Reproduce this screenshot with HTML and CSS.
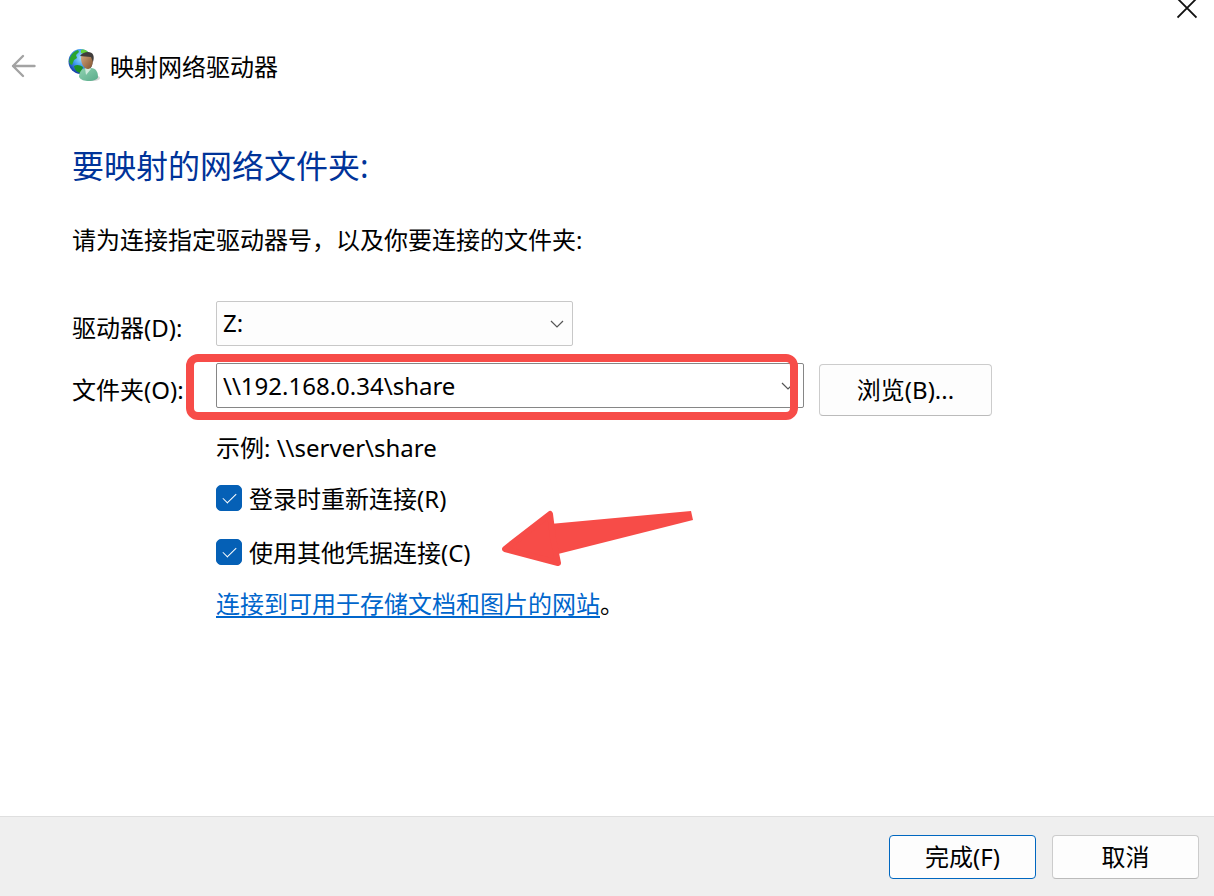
FILE: index.html
```
<!DOCTYPE html>
<html lang="zh-CN">
<head>
    <meta charset="UTF-8">
    <meta name="viewport" content="width=device-width, initial-scale=1.0">
    <title>映射网络驱动器</title>
    <link rel="stylesheet" href="styles.css">
</head>
<body>
    <form class="wizard">
        <div class="titlebar">
            <button type="button" class="close-btn" aria-label="关闭">
                <svg width="20" height="20" viewBox="0 0 20 20"><path d="M0.5 -1.5L19.5 17.5M19.5 -1.5L0.5 17.5" stroke="#111" stroke-width="1.8"/></svg>
            </button>
        </div>

        <header class="header">
            <button type="button" class="back-btn" aria-label="返回">
                <svg width="26" height="24" viewBox="0 0 26 24" fill="none" stroke="#a3a3a3" stroke-width="2.4" stroke-linecap="round" stroke-linejoin="round"><path d="M23.5 12H2M12 2L2 12l10 10"/></svg>
            </button>
            <svg class="app-icon" width="34" height="34" viewBox="0 0 34 34">
                <defs>
                    <radialGradient id="globe" cx="0.55" cy="0.35" r="0.7">
                        <stop offset="0" stop-color="#a8e6ff"/>
                        <stop offset="0.5" stop-color="#3f9cf0"/>
                        <stop offset="1" stop-color="#0b2c9c"/>
                    </radialGradient>
                    <linearGradient id="skin" x1="0" y1="0" x2="1" y2="1">
                        <stop offset="0" stop-color="#d9ad84"/>
                        <stop offset="1" stop-color="#80502b"/>
                    </linearGradient>
                    <linearGradient id="shirt" x1="0" y1="0" x2="1" y2="1">
                        <stop offset="0" stop-color="#8fd2b0"/>
                        <stop offset="1" stop-color="#5aab8b"/>
                    </linearGradient>
                </defs>
                <ellipse cx="26" cy="29" rx="6" ry="3" fill="#bdbdbd" opacity="0.6"/>
                <ellipse cx="12.5" cy="12.5" rx="12" ry="12.5" fill="url(#globe)"/>
                <path d="M2 9C4 4 7 2 10 1l1 2-3 3 1 3-3 2-2 5-2-1c-1-2-1-4 0-6z" fill="#2aa52d"/>
                <path d="M13 1c3-1 5 0 7 2l-3 2-4-1z" fill="#62cf3b"/>
                <path d="M6 17c3-2 6-1 9 1l-2 6c-3 0-6-2-7-7z" fill="#1d9126"/>
                <path d="M11 28c0-5 3-9 7-9h5c5 0 7 4 7 9 0 2-4 4-9 4s-8-1-10-4z" fill="url(#shirt)"/>
                <path d="M17 19l1 7 5-6-2-2h-4z" fill="#cfeadd"/>
                <path d="M13 9c0-3 3-5 6-5 5 0 6 3 6 7 0 5-2 9-5 9-4 0-7-5-7-11z" fill="url(#skin)"/>
                <path d="M12 7c2-3 5-4 8-4 5 0 7 4 5 10l-2-5c-4 0-8-1-11-1z" fill="#403d3c"/>
            </svg>
            <span class="app-title">映射网络驱动器</span>
        </header>

        <main class="content">
            <h1>要映射的网络文件夹:</h1>
            <p class="intro">请为连接指定驱动器号，以及你要连接的文件夹:</p>

            <div class="row">
                <label for="drive">驱动器(D):</label>
                <div class="field drive-field">
                    <select id="drive">
                        <option selected>Z:</option>
                    </select>
                    <svg class="chevron" width="14" height="8" viewBox="0 0 14 8" fill="none" stroke="#555" stroke-width="1.2"><path d="M1 1l6 6 6-6"/></svg>
                </div>
            </div>

            <div class="row">
                <label for="folder">文件夹(O):</label>
                <div class="field folder-field">
                    <input type="text" id="folder" value="\\192.168.0.34\share">
                    <svg class="chevron" width="14" height="8" viewBox="0 0 14 8" fill="none" stroke="#555" stroke-width="1.2"><path d="M1 1l6 6 6-6"/></svg>
                    <div class="highlight"></div>
                </div>
                <button type="button" class="btn browse-btn">浏览(B)...</button>
            </div>

            <div class="options">
                <p>示例: \\server\share</p>
                <div class="checks">
                    <div class="check">
                        <input type="checkbox" id="reconnect" checked>
                        <label for="reconnect">登录时重新连接(R)</label>
                    </div>
                    <div class="check">
                        <input type="checkbox" id="credentials" checked>
                        <label for="credentials">使用其他凭据连接(C)</label>
                        <svg class="arrow" width="194" height="60" viewBox="0 0 194 60" fill="#f74c48"><path d="M50 17L191 4l2 9L58 47z"/><path d="M5 42L50 7l3 24 5 25z" stroke="#f74c48" stroke-width="6" stroke-linejoin="round"/></svg>
                    </div>
                </div>
                <p><a href="#">连接到可用于存储文档和图片的网站</a>。</p>
            </div>
        </main>

        <footer class="footer">
            <button type="submit" class="btn primary">完成(F)</button>
            <button type="button" class="btn">取消</button>
        </footer>
    </form>
</body>
</html>
```
FILE: styles.css
```
* {
    box-sizing: border-box;
}

body {
    margin: 0;
    background: #fff;
    color: #000;
    font-family: "Noto Sans", "Noto Sans CJK SC", sans-serif;
    font-size: 24px;
    line-height: 36px;
}

button, input, select {
    font: inherit;
    color: inherit;
}

p, h1 {
    margin: 0;
}

.wizard {
    display: flex;
    flex-direction: column;
    min-height: 100vh;
}

.titlebar {
    display: flex;
    justify-content: flex-end;
    height: 47px;
    padding-right: 17px;
}

.close-btn, .back-btn {
    display: flex;
    padding: 0;
    border: none;
    background: none;
}

.header {
    display: flex;
    align-items: center;
    padding-left: 11px;
}

.app-icon {
    margin: 0 8px 0 31px;
}

.app-title {
    padding-top: 2px;
}

.content {
    flex: 1;
    padding: 57px 72px 24px;
}

h1 {
    color: #003399;
    font-size: 32px;
    font-weight: 400;
    line-height: 48px;
}

.intro {
    margin: 32px 0 43px;
}

.row {
    display: flex;
    align-items: flex-start;
    margin-bottom: 8px;
}

.row label {
    flex: none;
    width: 144px;
    line-height: 54px;
}

.field {
    position: relative;
}

.drive-field {
    width: 357px;
}

.folder-field {
    flex: 0 1 588px;
    margin-right: 15px;
}

.field select, .field input {
    display: block;
    width: 100%;
    height: 45px;
    padding: 0 36px 1px 6px;
    border: 1px solid #c8c8c8;
    border-radius: 2px;
    background: #fdfdfd;
    appearance: none;
    outline: none;
}

.field input {
    border-color: #868686;
    background: #fff;
}

.chevron {
    position: absolute;
    top: 19px;
    right: 9px;
    pointer-events: none;
}

/* red frame around the path */
.highlight {
    position: absolute;
    top: -9px;
    bottom: -12px;
    left: -30px;
    right: 6px;
    border: 8px solid #f74c48;
    border-radius: 12px;
    pointer-events: none;
}

.btn {
    min-width: 147px;
    height: 44px;
    padding: 0 16px;
    border: 1px solid #cccccc;
    border-bottom-color: #bbbbbb;
    border-radius: 4px;
    background: #fdfdfd;
    line-height: 36px;
}

.browse-btn {
    width: 173px;
    height: 52px;
    margin-top: 1px;
}

.options {
    display: flex;
    flex-direction: column;
    align-items: flex-start;
    gap: 15px;
    padding: 5px 0 0 144px;
}

.checks {
    display: grid;
    gap: 18px;
}

.check {
    display: flex;
    align-items: center;
    gap: 7px;
    position: relative;
}

.check input {
    display: grid;
    place-items: center;
    width: 26px;
    height: 26px;
    margin: 0 0 2px;
    border: 1px solid #8a8a8a;
    border-radius: 5px;
    appearance: none;
}

.check input:checked {
    border-color: #0560b6;
    background: #0560b6;
}

.check input:checked::after {
    content: "";
    width: 6px;
    height: 12px;
    margin-bottom: 4px;
    border: solid #fff;
    border-width: 0 1px 1px 0;
    transform: rotate(45deg);
}

.arrow {
    position: absolute;
    left: 284px;
    bottom: 4px;
}

a {
    color: #0066cc;
    text-underline-offset: 3px;
}

.footer {
    display: flex;
    justify-content: flex-end;
    gap: 16px;
    padding: 18px 15px 17px;
    border-top: 1px solid #dfdfdf;
    background: #efefef;
}

.primary {
    border-color: #0067c0;
}
```
